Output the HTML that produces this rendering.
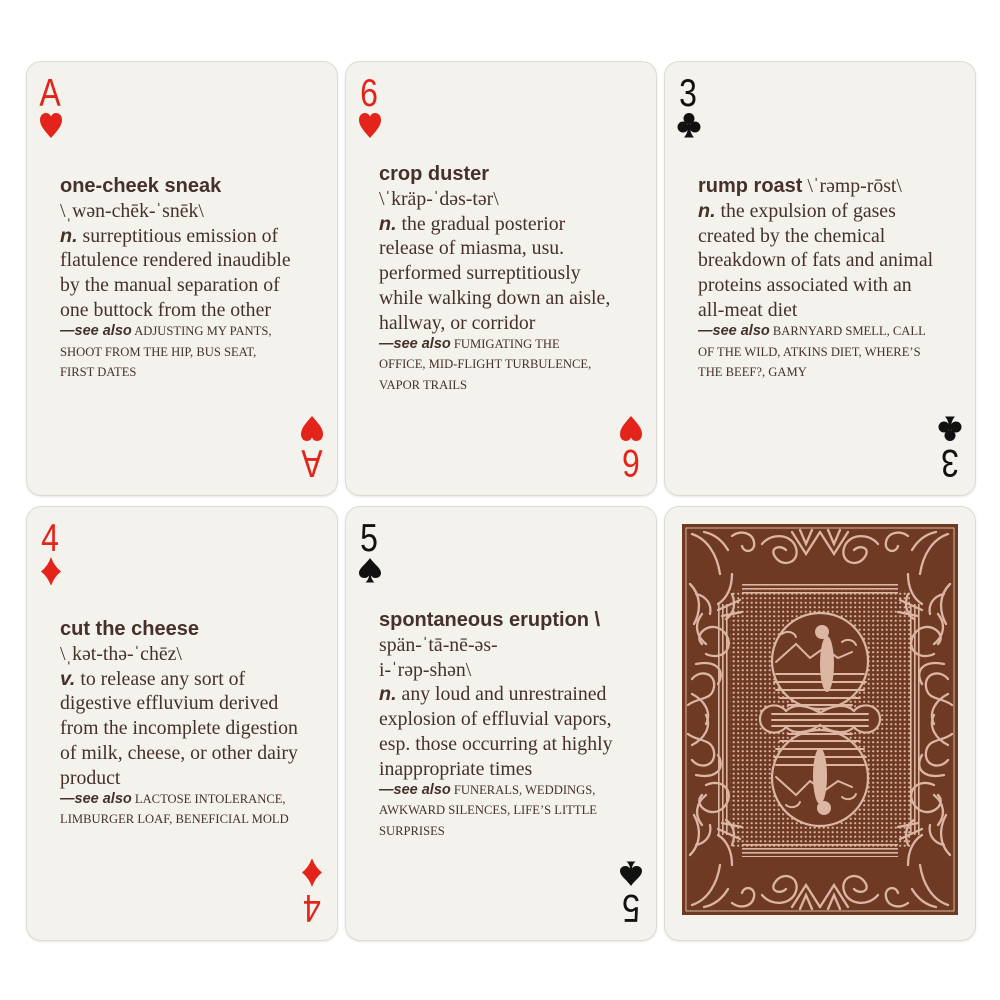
<!DOCTYPE html>
<html><head><meta charset="utf-8"><style>
body{margin:0;width:1000px;height:1000px;background:#fff;position:relative;overflow:hidden}
.card{position:absolute;width:310px;height:433px;background:#f4f2ec;border-radius:14px;box-shadow:0 0 0 1px #dedbd2,0 1px 3px rgba(0,0,0,.18)}
.rank{position:absolute;left:9px;top:12px;font:39px/1 "Liberation Sans",sans-serif;width:28px;text-align:center;transform:scaleX(.82)}
.suit{position:absolute;left:12px;top:50px;width:24px;height:28px}
.br{position:absolute;right:11px;bottom:13px;width:28px;height:80px;transform:rotate(180deg)}
.br .rank{left:0;top:0}.br .suit{left:2px;top:40px}
.red{color:#e2241b;fill:#e2241b}.blk{color:#111;fill:#111}
.txt{position:absolute;left:33px;width:275px;color:#45302a;font:19.8px/24.8px "Liberation Serif",serif;white-space:nowrap}
.t{font:bold 20px/24.8px "Liberation Sans",sans-serif}
.pos{font-style:italic;font-weight:bold;font-family:"Liberation Sans",sans-serif}
.sa{font:12.6px/20.8px "Liberation Serif",serif;margin-top:-2px;text-transform:uppercase}
.sa b{font:italic bold 14.5px "Liberation Sans",sans-serif;text-transform:none}
</style></head><body>
<svg width="0" height="0" style="position:absolute"><defs>
<path id="h" d="M12 26C6 19 1 14 1 8 1 3.5 3.7 1 7 1 9.5 1 11 2.5 12 4.5 13 2.5 14.5 1 17 1 20.3 1 23 3.5 23 8 23 14 18 19 12 26Z"/>
<path id="d" d="M12 0Q15 9 22 14.5 15 20 12 29 9 20 2 14.5 9 9 12 0Z"/>
<path id="s" d="M12 1C8 7 1 11 1 16 1 19.5 4 21 6.5 21 8.5 21 10 20 11 18.5 10.8 21 10 23 7.5 25.5L16.5 25.5C14 23 13.2 21 13 18.5 14 20 15.5 21 17.5 21 20 21 23 19.5 23 16 23 11 16 7 12 1Z"/>
<g id="c"><circle cx="12" cy="6.5" r="5.5"/><circle cx="6" cy="15" r="5.5"/><circle cx="18" cy="15" r="5.5"/><path d="M11 12H13C13 19 14 22 17 25.5H7C10 22 11 19 11 12Z"/></g>
</defs></svg>

<div class="card" style="left:27px;top:62px">
<div class="rank red">A</div><svg class="suit red" viewBox="0 0 24 28"><use href="#h"/></svg>
<div class="br"><div class="rank red">A</div><svg class="suit red" viewBox="0 0 24 28"><use href="#h"/></svg></div>
<div class="txt" style="top:112px"><div class="t">one-cheek sneak</div>\ˌwən-chēk-ˈsnēk\<br><span class="pos">n.</span> surreptitious emission of<br>flatulence rendered inaudible<br>by the manual separation of<br>one buttock from the other
<div class="sa"><b>—see also</b> adjusting my pants,<br>shoot from the hip, bus seat,<br>first dates</div></div>
</div>

<div class="card" style="left:346px;top:62px">
<div class="rank red">6</div><svg class="suit red" viewBox="0 0 24 28"><use href="#h"/></svg>
<div class="br"><div class="rank red">6</div><svg class="suit red" viewBox="0 0 24 28"><use href="#h"/></svg></div>
<div class="txt" style="top:100px"><div class="t">crop duster</div>\ˈkräp-ˈdəs-tər\<br><span class="pos">n.</span> the gradual posterior<br>release of miasma, usu.<br>performed surreptitiously<br>while walking down an aisle,<br>hallway, or corridor
<div class="sa"><b>—see also</b> fumigating the<br>office, mid-flight turbulence,<br>vapor trails</div></div>
</div>

<div class="card" style="left:665px;top:62px">
<div class="rank blk">3</div><svg class="suit blk" viewBox="0 0 24 28"><use href="#c"/></svg>
<div class="br"><div class="rank blk">3</div><svg class="suit blk" viewBox="0 0 24 28"><use href="#c"/></svg></div>
<div class="txt" style="top:112px"><span class="t">rump roast</span> \ˈrəmp-rōst\<br><span class="pos">n.</span> the expulsion of gases<br>created by the chemical<br>breakdown of fats and animal<br>proteins associated with an<br>all-meat diet
<div class="sa"><b>—see also</b> barnyard smell, call<br>of the wild, atkins diet, where’s<br>the beef?, gamy</div></div>
</div>

<div class="card" style="left:27px;top:507px">
<div class="rank red">4</div><svg class="suit red" viewBox="0 0 24 28"><use href="#d"/></svg>
<div class="br"><div class="rank red">4</div><svg class="suit red" viewBox="0 0 24 28"><use href="#d"/></svg></div>
<div class="txt" style="top:110px"><div class="t">cut the cheese</div>\ˌkət-thə-ˈchēz\<br><span class="pos">v.</span> to release any sort of<br>digestive effluvium derived<br>from the incomplete digestion<br>of milk, cheese, or other dairy<br>product
<div class="sa"><b>—see also</b> lactose intolerance,<br>limburger loaf, beneficial mold</div></div>
</div>

<div class="card" style="left:346px;top:507px">
<div class="rank blk">5</div><svg class="suit blk" viewBox="0 0 24 28"><use href="#s"/></svg>
<div class="br"><div class="rank blk">5</div><svg class="suit blk" viewBox="0 0 24 28"><use href="#s"/></svg></div>
<div class="txt" style="top:101px"><div class="t">spontaneous eruption \</div>spän-ˈtā-nē-əs-<br>i-ˈrəp-shən\<br><span class="pos">n.</span> any loud and unrestrained<br>explosion of effluvial vapors,<br>esp. those occurring at highly<br>inappropriate times
<div class="sa"><b>—see also</b> funerals, weddings,<br>awkward silences, life’s little<br>surprises</div></div>
</div>

<div class="card" style="left:665px;top:507px">
<svg style="position:absolute;left:17px;top:17px" width="276" height="391" viewBox="0 0 276 391">
<defs><pattern id="dots" width="4.5" height="4.5" patternUnits="userSpaceOnUse"><circle cx="2.2" cy="2.2" r="1.1" fill="#dcb5a3"/></pattern>
<pattern id="hl" width="6" height="4" patternUnits="userSpaceOnUse"><rect width="6" height="1.6" fill="#dcb5a3"/></pattern>
<pattern id="vl" width="4" height="6" patternUnits="userSpaceOnUse"><rect width="1.6" height="6" fill="#dcb5a3"/></pattern>
<g id="sw" fill="none" stroke="#dcb5a3" stroke-width="2.3" stroke-linecap="round">
<path d="M10 10c15 5 25 20 28 40M22 8c10 2 18 8 24 18M50 12c8-6 20-4 22 6s-10 12-12 4M80 20c10-12 30-10 34 4s-12 20-20 10s4-14 10-8"/>
<path d="M8 60c10 10 12 25 4 40M20 90c-8 10-6 22 4 30M14 70c10 2 16 10 14 20"/>
<path d="M20 120c-10-10 10-25 22-12s0 30-18 22M14 140c20-4 30 6 22 20M10 170c12 6 20 18 14 30"/>
<path d="M6 210c10 8 24 4 26 18s-14 18-22 8"/>
<path d="M50 50c0 15-6 25-14 30M36 86l22-10M40 92l20-4M50 70c4 10 2 20-6 25"/>
<path d="M110 8l14 22 14-22M118 6l6 14 6-14"/>
</g></defs>
<rect width="276" height="391" fill="#6e3a24"/>
<rect x="4" y="4" width="268" height="383" fill="none" stroke="#dcb5a3" stroke-width="1"/>
<rect x="48" y="66" width="180" height="259" fill="url(#dots)"/>
<rect x="60" y="58" width="156" height="14" fill="url(#hl)"/>
<rect x="60" y="319" width="156" height="14" fill="url(#hl)"/>
<rect x="36" y="80" width="12" height="231" fill="url(#vl)"/>
<rect x="228" y="80" width="12" height="231" fill="url(#vl)"/>
<use href="#sw"/>
<use href="#sw" transform="translate(276 0) scale(-1 1)"/>
<use href="#sw" transform="translate(0 391) scale(1 -1)"/>
<use href="#sw" transform="translate(276 391) scale(-1 -1)"/>
<g fill="#6e3a24" stroke="#dcb5a3" stroke-width="2.2">
<circle cx="138" cy="137" r="48"/><circle cx="138" cy="254" r="48"/>
<path d="M78 195c0-14 18-18 26-8 8-8 22-6 34 2 12-8 26-10 34-2 8-10 26-6 26 8s-18 18-26 8c-8 8-22 6-34-2-12 8-26 10-34 2-8 10-26 6-26-8z"/>
</g>
<g fill="none" stroke="#dcb5a3" stroke-width="2" stroke-linecap="round">
<path d="M94 150h88M92 158h92M94 166h88M98 174h80M106 181h64M94 241h88M92 233h92M94 225h88M98 217h80M106 210h64"/>
<path d="M94 138l20-18 14 14 14-10 14 10 14-6M94 253l20 18 14-14 14 10 14-10 14 6"/>
<path d="M100 110c5-4 12-2 14 3M160 118c5-4 12-2 14 3M104 281c5 4 12 2 14-3M160 273c5 4 12 2 14-3"/>
<path d="M90 190h96M90 196h96M90 202h96"/>
</g>
<g fill="#dcb5a3"><ellipse cx="145" cy="140" rx="7" ry="28"/><circle cx="140" cy="108" r="7"/><ellipse cx="138" cy="252" rx="7" ry="28"/><circle cx="142" cy="284" r="7"/></g>
</svg>
</div>
</body></html>
